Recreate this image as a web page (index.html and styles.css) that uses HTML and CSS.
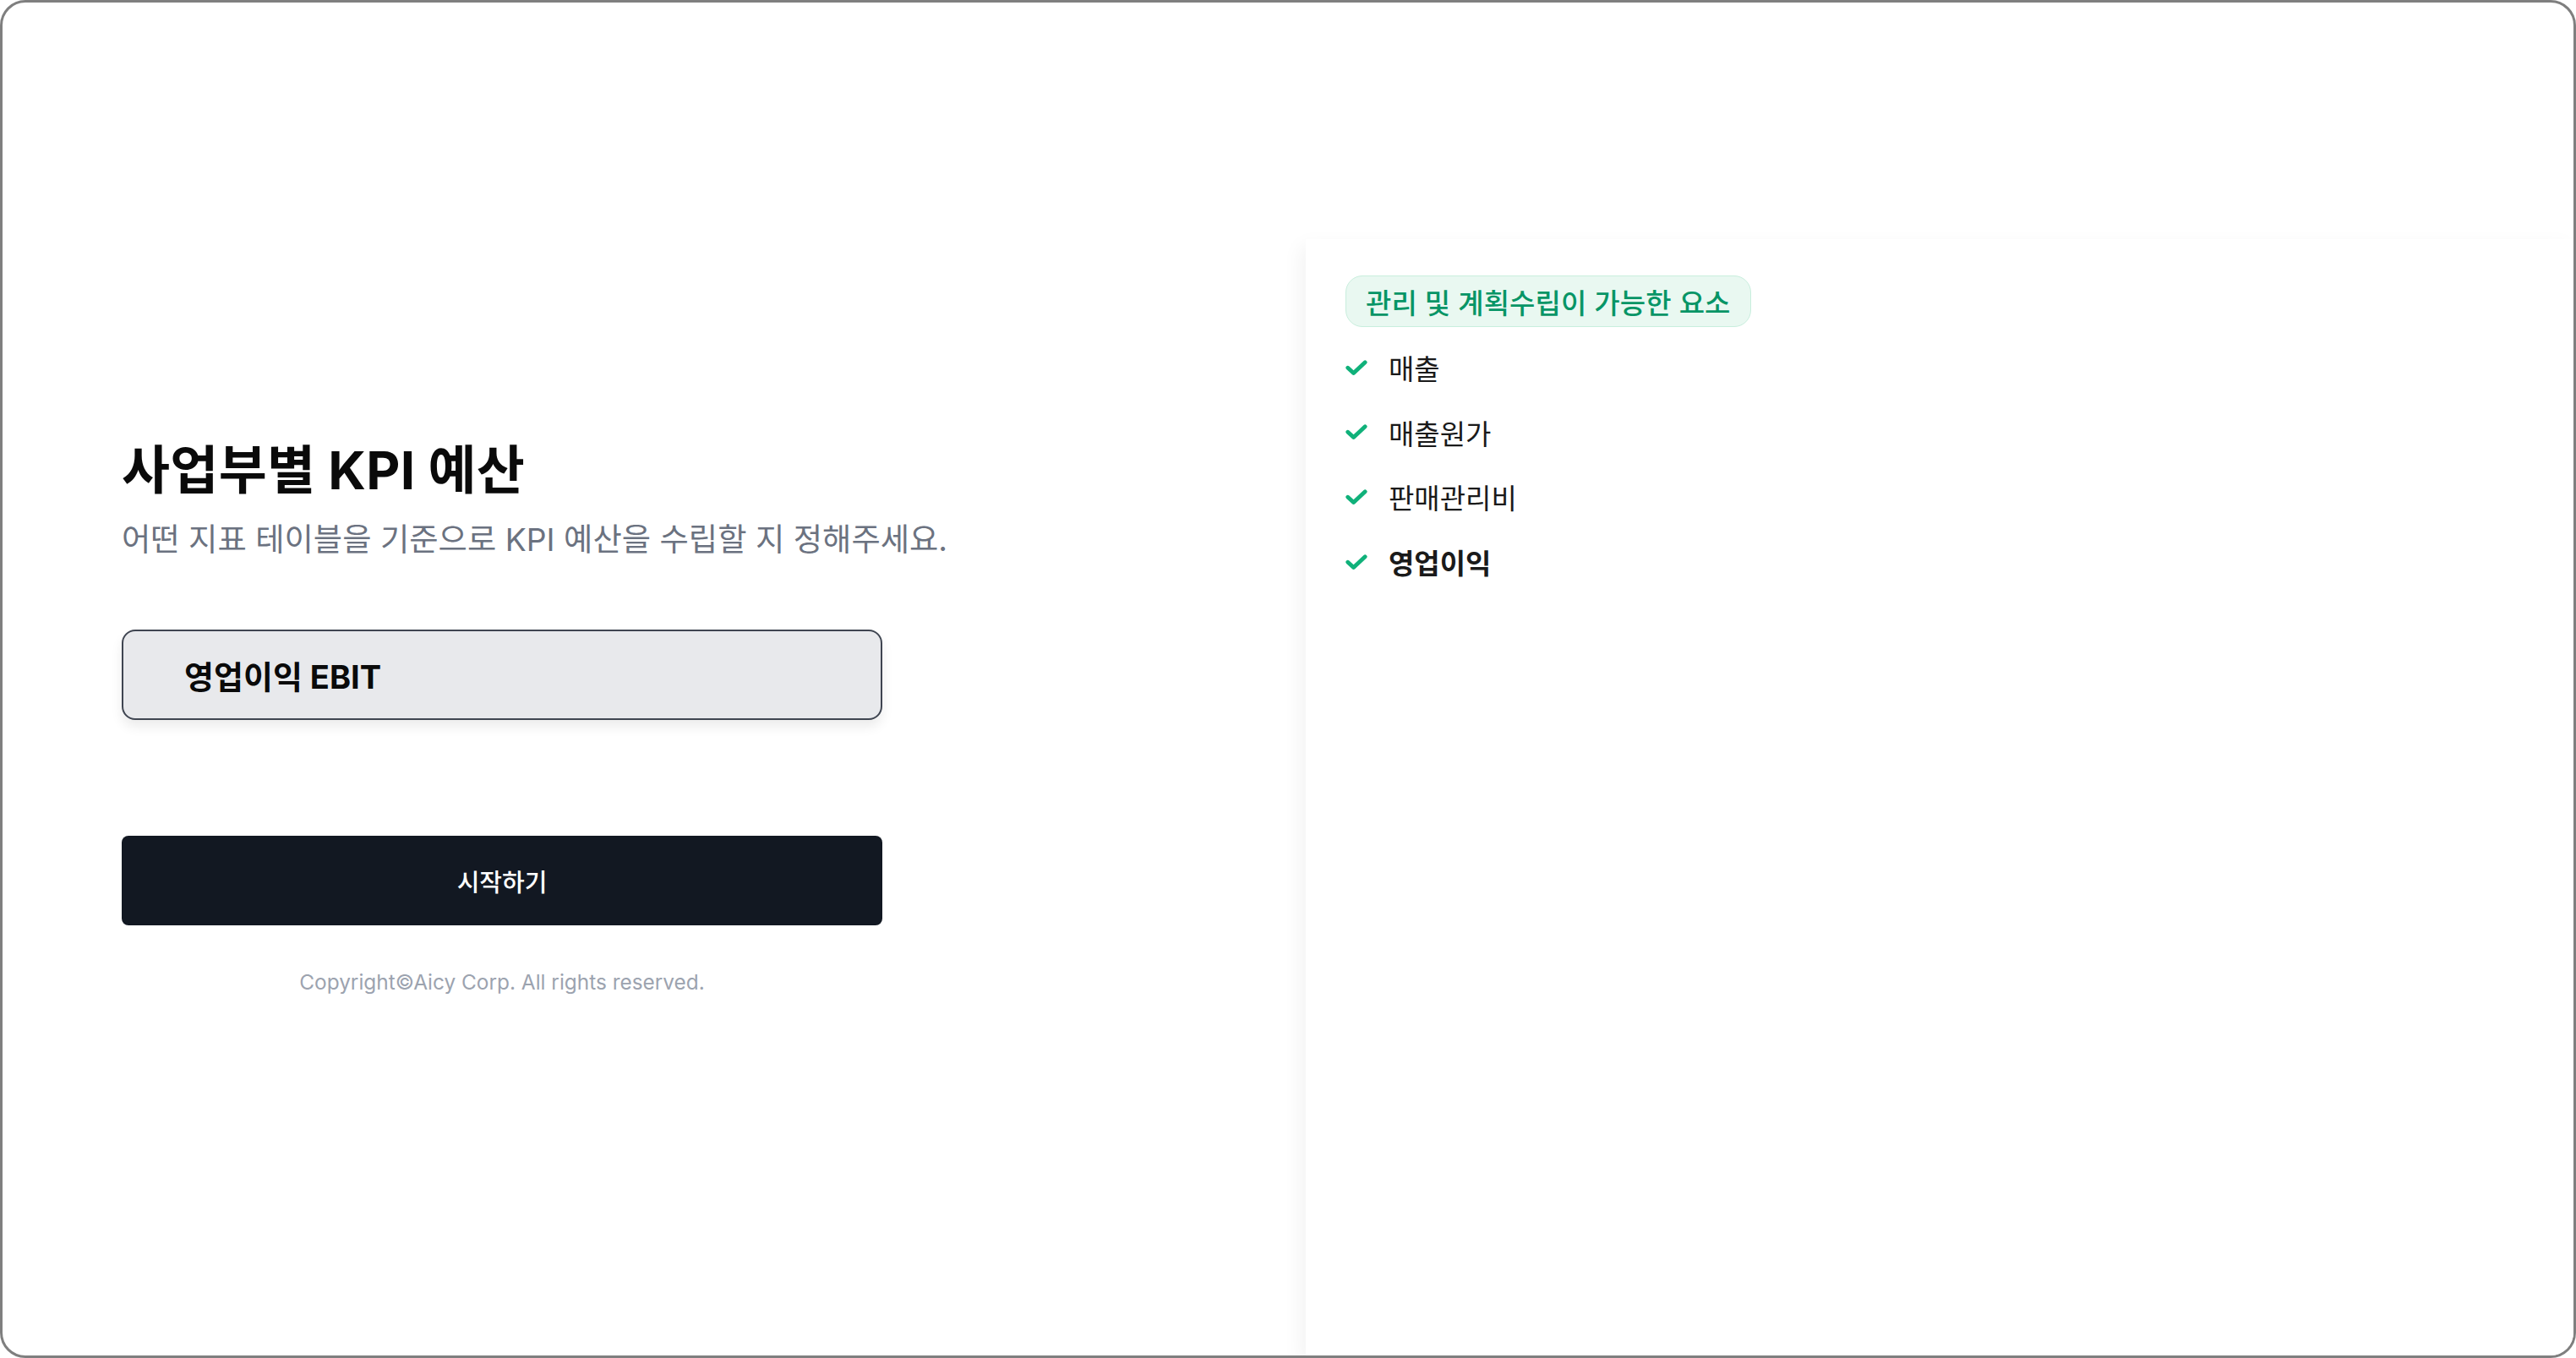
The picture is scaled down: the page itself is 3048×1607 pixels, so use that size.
FILE: index.html
```html
<!DOCTYPE html>
<html lang="ko">
<head>
<meta charset="utf-8">
<title>사업부별 KPI 예산</title>
<link rel="stylesheet" href="styles.css">
</head>
<body>
<div class="frame">
  <section class="left">
    <h1 class="title">사업부별 KPI 예산</h1>
    <p class="subtitle">어떤 지표 테이블을 기준으로 KPI 예산을 수립할 지 정해주세요.</p>
    <div class="select-box">영업이익 EBIT</div>
    <button class="start-btn" type="button">시작하기</button>
    <p class="copyright">Copyright©Aicy Corp. All rights reserved.</p>
  </section>
  <aside class="right">
    <div class="badge">관리 및 계획수립이 가능한 요소</div>
    <ul class="items">
      <li class="item"><svg class="check" viewBox="0 0 26 19" width="26" height="19"><polyline points="2.8,9.2 9.6,15.6 23.2,2.8"/></svg><span>매출</span></li>
      <li class="item"><svg class="check" viewBox="0 0 26 19" width="26" height="19"><polyline points="2.8,9.2 9.6,15.6 23.2,2.8"/></svg><span>매출원가</span></li>
      <li class="item"><svg class="check" viewBox="0 0 26 19" width="26" height="19"><polyline points="2.8,9.2 9.6,15.6 23.2,2.8"/></svg><span>판매관리비</span></li>
      <li class="item item-active"><svg class="check" viewBox="0 0 26 19" width="26" height="19"><polyline points="2.8,9.2 9.6,15.6 23.2,2.8"/></svg><span>영업이익</span></li>
    </ul>
  </aside>
</div>
</body>
</html>
```

FILE: styles.css
```css
html, body {
  margin: 0;
  padding: 0;
  background: #ffffff;
}

body {
  font-family: "Inter", "Noto Sans CJK KR", sans-serif;
  color: #111111;
}

.frame {
  box-sizing: border-box;
  width: 3048px;
  height: 1607px;
  border: 3px solid #7f7f7f;
  border-radius: 30px;
  overflow: hidden;
  display: flex;
  background: #ffffff;
}

.left {
  box-sizing: border-box;
  width: 1542px;
  flex: none;
  padding: 517px 0 0 141px;
  display: flex;
  flex-direction: column;
}

.title {
  margin: 0;
  font-size: 62px;
  line-height: 74px;
  font-weight: 700;
  letter-spacing: 0.3px;
  color: #0a0a0a;
}

.subtitle {
  margin: 22px 0 0;
  font-size: 37.3px;
  line-height: 46px;
  font-weight: 400;
  color: #6b7280;
}

.select-box {
  box-sizing: border-box;
  margin-top: 83px;
  width: 900px;
  height: 107px;
  border: 2px solid #3f4551;
  border-radius: 16px;
  background: #e8e9ec;
  box-shadow: 0 8px 14px rgba(0, 0, 0, 0.08);
  display: flex;
  align-items: center;
  padding-left: 72px;
  font-size: 38px;
  font-weight: 700;
  letter-spacing: 0;
  color: #0a0a0a;
}

.start-btn {
  box-sizing: border-box;
  margin-top: 137px;
  width: 900px;
  height: 106px;
  border: none;
  border-radius: 8px;
  background: #121822;
  color: #ffffff;
  font-family: "Inter", "Noto Sans CJK KR", sans-serif;
  font-size: 29px;
  font-weight: 500;
  letter-spacing: 0;
  display: flex;
  align-items: center;
  justify-content: center;
  padding: 0;
}

.copyright {
  margin: 51px 0 0;
  width: 900px;
  text-align: center;
  font-size: 24.4px;
  line-height: 32px;
  color: #9ca3af;
}

.right {
  box-sizing: border-box;
  flex: 1;
  margin-top: 280px;
  background: #ffffff;
  box-shadow: -6px 8px 22px rgba(0, 0, 0, 0.05);
  padding: 43px 0 0 47px;
}

.badge {
  box-sizing: border-box;
  display: inline-flex;
  align-items: center;
  height: 61px;
  padding: 0 23px 0 23px;
  border: 1.5px solid #c8eedd;
  border-radius: 20px;
  background: #e9f8f1;
  color: #079566;
  font-size: 33px;
  letter-spacing: 0.1px;
  font-weight: 500;
}

.items {
  list-style: none;
  margin: 28px 0 0;
  padding: 0;
  display: flex;
  flex-direction: column;
  gap: 36.7px;
}

.item {
  display: flex;
  align-items: center;
  gap: 25px;
  height: 40px;
  font-size: 33px;
  color: #1a1a1a;
}

.item-active {
  font-weight: 700;
}

.check {
  flex: none;
  fill: none;
  stroke: #10b17a;
  stroke-width: 4.8;
  stroke-linecap: round;
  stroke-linejoin: round;
}
```
